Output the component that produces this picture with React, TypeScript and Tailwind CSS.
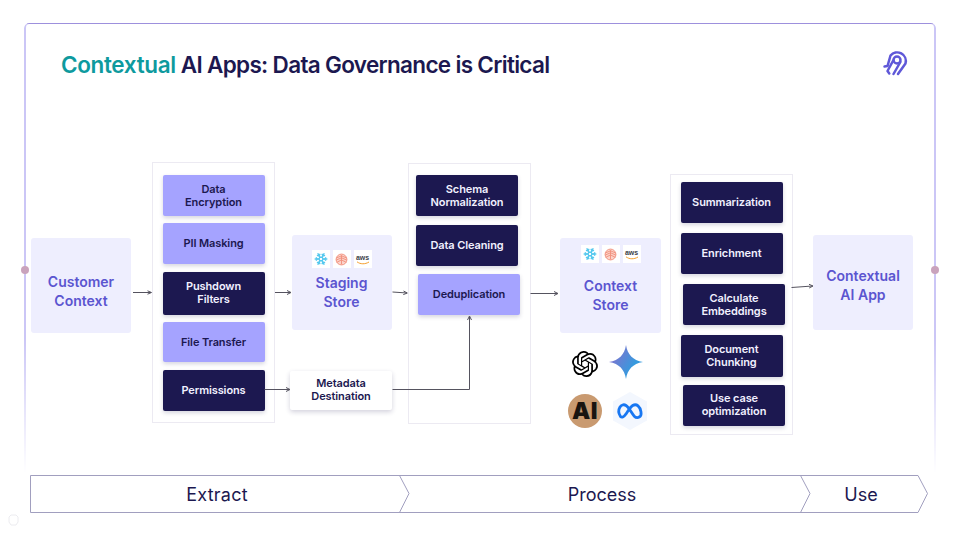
import React from "react";
import { Snowflake } from "lucide-react";
import { SiOpenai } from "react-icons/si";

const Box = ({ kind, className = "", children }: { kind: "dark" | "light"; className?: string; children: React.ReactNode }) => (
  <div
    className={`w-[102px] flex items-center justify-center text-center text-[11px] font-semibold tracking-[-0.1px] leading-[13px] rounded-[2px] shadow-[0_2px_4px_rgba(30,26,80,0.18)] ${
      kind === "dark" ? "bg-[#1c1850] text-[#f1f0ff]" : "bg-[#a5a3ff] text-[#1c1850]"
    } ${className}`}
  >
    <span>{children}</span>
  </div>
);

const Tile = ({ children }: { children: React.ReactNode }) => (
  <div className="w-[18px] h-[18px] bg-white flex items-center justify-center">{children}</div>
);

const LakeIcon = () => (
  <svg width="13" height="13" viewBox="0 0 12 12" fill="none" stroke="#f2937f" strokeWidth="0.9">
    <circle cx="6" cy="6" r="5" fill="#fbd3ca" />
    <path d="M1.2 4.6 6 2.6l4.8 2M1 6.6 6 4.4l5 2.2M1.6 8.6 6 6.4l4.4 2.2M6 2v8.5" />
  </svg>
);

const AwsIcon = () => (
  <div className="flex flex-col items-center">
    <span className="text-[7px] leading-[7px] font-bold text-[#3b3f4a] font-['Liberation_Sans',sans-serif]">aws</span>
    <svg width="14" height="4" viewBox="0 0 14 4" fill="none">
      <path d="M1 .8c3.5 2.6 8 2.6 12 .2" stroke="#f59e2c" strokeWidth="1" />
    </svg>
  </div>
);

const Tiles = () => (
  <div className="flex gap-[3px]">
    <Tile><Snowflake size={14} strokeWidth={2.4} color="#55c8ee" /></Tile>
    <Tile><LakeIcon /></Tile>
    <Tile><AwsIcon /></Tile>
  </div>
);

const Card = ({ className = "", children }: { className?: string; children: React.ReactNode }) => (
  <div className={`absolute h-[95px] rounded-[3px] bg-[#eeeefe] flex flex-col items-center text-center text-[14px] font-semibold leading-[18.5px] text-[#5b55d0] ${className}`}>
    {children}
  </div>
);

const Panel = ({ className = "", children }: { className?: string; children: React.ReactNode }) => (
  <div className={`absolute bg-white border border-[#eceaf2] flex flex-col ${className}`}>{children}</div>
);

export default function App() {
  return (
    <div className="relative w-[960px] h-[540px] overflow-hidden bg-white font-['Inter',sans-serif]">
      {/* slide frame, fading out toward the bottom */}
      <div className="absolute left-[24px] top-[23px] w-[912px] h-[450px] rounded-t-[5px] border-t border-t-[#9d90dd] border-x-2 border-x-[#cbc6f6] [mask-image:linear-gradient(to_bottom,black_70%,transparent)]" />
      <div className="absolute left-[21px] top-[266px] w-[8px] h-[8px] rounded-full bg-[#c9a3bc]" />
      <div className="absolute left-[931px] top-[266px] w-[8px] h-[8px] rounded-full bg-[#c9a3bc]" />

      <h1 className="absolute left-[61px] top-[50px] text-[22.5px] leading-[30px] font-semibold tracking-[-0.68px] text-[#1c1850] whitespace-nowrap">
        <span className="text-[#0e9a9e] tracking-[-0.35px]">Contextual</span> AI Apps: Data Governance is Critical
      </h1>

      <svg className="absolute left-[880px] top-[48px]" width="30" height="30" viewBox="880 48 30 30" fill="none" stroke="#5f58d8" strokeWidth="2.500" strokeLinecap="round" strokeLinejoin="round">
        <path d="M884.500 66.500l3-.4 3-10.600a8.700 8.700 0 0 1 15 8L898 74" />
        <circle cx="897" cy="60" r="3.500" />
        <path d="M900.400 62l-6.900 12" />
        <path d="M893.200 60.500l-5.700 10.500 1.800 2.500" />
      </svg>

      <Card className="left-[31px] top-[238px] w-[100px] justify-center pt-[12px]">
        <span>Customer<br />Context</span>
      </Card>

      <Panel className="left-[152px] top-[162px] w-[123px] h-[261px] px-[9.500px] pt-[12px]">
        <Box kind="light" className="h-[41px]">Data<br />Encryption</Box>
        <Box kind="light" className="h-[41px] mt-[7px]">PII Masking</Box>
        <Box kind="dark" className="h-[42.500px] mt-[8px]">Pushdown<br />Filters</Box>
        <Box kind="light" className="h-[40px] mt-[7.500px]">File Transfer</Box>
        <Box kind="dark" className="h-[41px] mt-[7.500px]">Permissions</Box>
      </Panel>

      <Card className="left-[291.500px] top-[235px] w-[100px] pt-[15px]">
        <Tiles />
        <span className="mt-[6px]">Staging<br />Store</span>
      </Card>

      <div className="absolute left-[290px] top-[371px] w-[102px] h-[39px] bg-white rounded-[2px] shadow-[0_2px_5px_rgba(30,26,80,0.2)] flex items-center justify-center text-center text-[11px] font-semibold tracking-[-0.1px] leading-[13px] text-[#1c1850]">
        <span className="mt-[-1px]">Metadata<br />Destination</span>
      </div>

      <Panel className="left-[408px] top-[163px] w-[123px] h-[261px] pl-[7px] pt-[11px] gap-[8.500px]">
        <Box kind="dark" className="h-[41px]">Schema<br />Normalization</Box>
        <Box kind="dark" className="h-[41px]">Data Cleaning</Box>
        <Box kind="light" className="h-[41px] ml-[2px]">Deduplication</Box>
      </Panel>

      <Card className="left-[560px] top-[238px] w-[101px] pt-[7px]">
        <Tiles />
        <span className="mt-[14px]">Context<br />Store</span>
      </Card>

      {/* model logos */}
      <SiOpenai className="absolute left-[572px] top-[351px] text-[26px] text-black" />
      <svg className="absolute left-[608px] top-[344px]" width="36" height="36" viewBox="0 0 36 36">
        <defs>
          <linearGradient id="gem" x1="0" y1="0" x2="1" y2="0.6">
            <stop offset="0.1" stopColor="#8a6dcc" />
            <stop offset="0.8" stopColor="#369ade" />
          </linearGradient>
        </defs>
        <path d="M18 1c1.600 9.600 6.600 15.200 17 17-10.400 1.800-15.400 7.400-17 17-1.600-9.600-6.600-15.200-17-17C11.400 16.200 16.400 10.600 18 1z" fill="url(#gem)" />
      </svg>
      <div className="absolute left-[568px] top-[394px] w-[34px] h-[34px] rounded-full bg-[#c99a70] flex items-center justify-center text-[23px] leading-none font-black tracking-[0.5px] text-[#191410] font-['Inter',sans-serif]">
        AI
      </div>
      <svg className="absolute left-[610px] top-[391px]" width="40" height="40" viewBox="0 0 40 40" fill="none">
        <path d="M20 1l17 9.500v19L20 39 3 29.500v-19z" fill="#f3f7fe" />
        <path d="M10.500 25.500c-4.500-7 1-14 5.500-11 3.300 2.300 5.300 7.200 8 10.400 3.700 3.700 7.800.7 7-4-.8-5.300-4.400-8.800-8.300-6.400-2.700 1.700-4.700 5.700-7 8.800-1.900 2.900-4 3.500-5.200 2.200z" stroke="#1877f2" strokeWidth="2.800" strokeLinejoin="round" />
      </svg>

      <Panel className="left-[670px] top-[174px] w-[123px] h-[261px] pl-[9.500px] pt-[6.500px]">
        <Box kind="dark" className="h-[41.500px]">Summarization</Box>
        <Box kind="dark" className="h-[41px] mt-[10px]">Enrichment</Box>
        <Box kind="dark" className="h-[41px] mt-[10px] ml-[2.500px]">Calculate<br />Embeddings</Box>
        <Box kind="dark" className="h-[41.500px] mt-[10px]">Document<br />Chunking</Box>
        <Box kind="dark" className="h-[41.500px] mt-[8px] ml-[2.500px]">Use case<br />optimization</Box>
      </Panel>

      <Card className="left-[813px] top-[235px] w-[100px] justify-center pt-[6px]">
        <span>Contextual<br />AI App</span>
      </Card>

      {/* connectors */}
      <svg className="absolute left-0 top-0 pointer-events-none" width="960" height="540" fill="none" stroke="#55535f" strokeWidth="1">
        <path d="M133 292.500h18M147.500 290.800l4 1.700-4 1.700" />
        <path d="M275 292.500h15.500M287 290.500l4 2-4 2" />
        <path d="M392.500 292l14.500 1M403.500 291l3.800 2-4 1.600" />
        <path d="M530.500 293.500h27M554 291.500l4 2-4 2" />
        <path d="M791.500 287.500l21-1.500M809 284.300l4 1.700-3.800 2" />
        <path d="M264.500 389.500h25M286 387.500l4 2-4 2" />
        <path d="M392.500 389.500h77V317" />
        <path d="M467.500 320l2-4 2 4" />
      </svg>

      {/* phase ribbon */}
      <svg className="absolute left-[30px] top-[475px]" width="900" height="38" viewBox="0 0 900 38" fill="none" stroke="#a19fbf" strokeWidth="1">
        <path d="M.5.500H888l9.500 18-9.500 19H.5z" />
        <path d="M369.500.500l9.500 18-9.500 19" />
        <path d="M770.500.500l9.500 18-9.500 19" />
      </svg>
      <div className="absolute left-[30px] top-[475px] w-[898px] h-[38px] flex items-center text-[18px] text-[#1c1850]">
        <span className="w-[374px] text-center tracking-[0.25px]">Extract</span>
        <span className="w-[396px] text-center">Process</span>
        <span className="w-[122px] text-center">Use</span>
      </div>

      <svg className="absolute left-[8px] top-[514px]" width="11" height="12" viewBox="0 0 11 12" fill="none" stroke="#ececf0" strokeWidth="1">
        <path d="M3 1h5l2 2v5l-2 3H3L1 8V3z" />
      </svg>
    </div>
  );
}
